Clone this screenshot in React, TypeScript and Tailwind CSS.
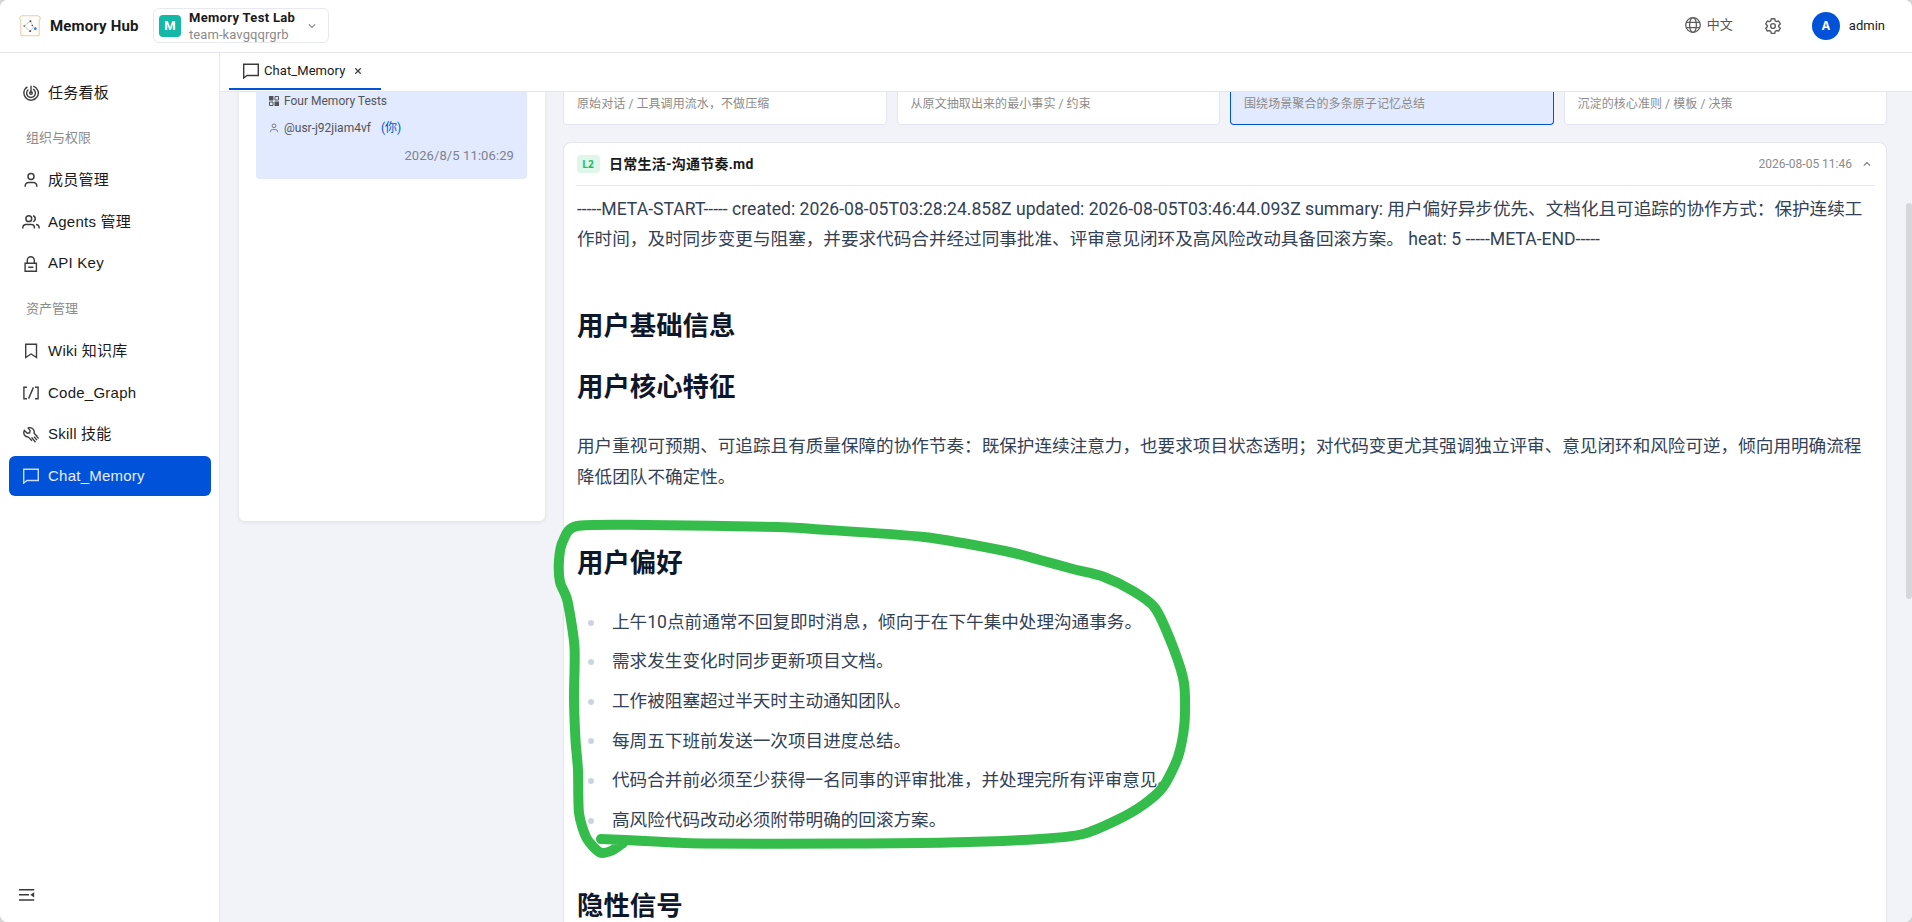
import React from 'react';

type IconProps = { className?: string };

const ChatIcon = ({ className }: IconProps) => (
  <svg className={className} viewBox="0 0 16 16" fill="none" stroke="currentColor" strokeWidth="1.4">
    <path d="M.7 1.2h14.6v11.3H4L.7 15V1.2z" />
  </svg>
);

const TaskIcon = ({ className }: IconProps) => (
  <svg className={className} viewBox="0 0 16 16" fill="none" stroke="currentColor" strokeWidth="1.4">
    <path d="M8 8V.8M10.2 1.1A7.2 7.2 0 1 1 4.4 1.8" />
    <path d="M10 4.1A4.4 4.4 0 1 1 5.4 4.5" />
    <circle cx="8" cy="8" r="1.3" />
  </svg>
);

const UserIcon = ({ className }: IconProps) => (
  <svg className={className} viewBox="0 0 16 16" fill="none" stroke="currentColor" strokeWidth="1.5">
    <circle cx="8" cy="4.5" r="3" />
    <path d="M2.2 14.8v-.9a3.4 3.4 0 0 1 3.4-3.4h4.8a3.4 3.4 0 0 1 3.4 3.4v.9" />
  </svg>
);

const UsersIcon = ({ className }: IconProps) => (
  <svg className={className} viewBox="0 0 18 16" fill="none" stroke="currentColor" strokeWidth="1.5">
    <circle cx="6.8" cy="4.7" r="2.9" />
    <path d="M.8 14.5v-1a3 3 0 0 1 3-3h5.6a3 3 0 0 1 3 3v1M11 1.8a3 3 0 0 1 0 5.8M14 10.5a3 3 0 0 1 3.1 3v1" />
  </svg>
);

const LockIcon = ({ className }: IconProps) => (
  <svg className={className} viewBox="0 0 16 16" fill="none" stroke="currentColor" strokeWidth="1.4">
    <path d="M2.1 7.3h11.3v7.9H2.1zM4.3 7.3V4.2a3.5 3.5 0 0 1 7 0v3.1M5.2 11.2h5.2" />
  </svg>
);

const BookmarkIcon = ({ className }: IconProps) => (
  <svg className={className} viewBox="0 0 16 16" fill="none" stroke="currentColor" strokeWidth="1.4">
    <path d="M2.7 1.3h10.8v13.2L8.1 11l-5.4 3.5z" />
  </svg>
);

const CodeIcon = ({ className }: IconProps) => (
  <svg className={className} viewBox="0 0 16 16" fill="none" stroke="currentColor" strokeWidth="1.4">
    <path d="M4 2.2H.9v11.6H4M12 2.2h3.1v11.6H12M10.4 2.4 5.6 13.6" />
  </svg>
);

const ToolIcon = ({ className }: IconProps) => (
  <svg className={className} viewBox="0 0 16 16" fill="none" stroke="currentColor" strokeWidth="1.4">
    <path d="M4.8.9 7.1 3.4 6.6 5.8 4.3 6.2 1.4 3.4C-.1 6.5 1.5 10.1 5.4 10.1L9 13.7M4.8.9c3.8-1 7.2 1.5 6.3 5.4l3 3M8.6 10.4l3.9 4.9M11 9.6l2.9 3.5M13 8.6l2.6 2.9" />
  </svg>
);

const GlobeIcon = ({ className }: IconProps) => (
  <svg className={className} viewBox="0 0 16 16" fill="none" stroke="currentColor" strokeWidth="1.3">
    <circle cx="8" cy="8" r="7.3" />
    <ellipse cx="8" cy="8" rx="3.4" ry="7.3" />
    <path d="M1.2 5.3h13.6M1.2 10.7h13.6" />
  </svg>
);

const GearIcon = ({ className }: IconProps) => (
  <svg className={className} viewBox="0 0 16 16" fill="none" stroke="currentColor" strokeWidth="1.4" strokeLinejoin="round">
    <circle cx="8" cy="8" r="2.4" />
    <path d="M6.3.7h3.4l.5 2.1 1.3.8 2.1-.6 1.7 2.9-1.6 1.5v1.3l1.6 1.5-1.7 2.9-2.1-.6-1.3.8-.5 2.1H6.3l-.5-2.1-1.3-.8-2.1.6L.7 10.2l1.6-1.5V7.4L.7 5.9 2.4 3l2.1.6 1.3-.8z" />
  </svg>
);

const LogoIcon = ({ className }: IconProps) => (
  <svg className={className} viewBox="0 0 22 22" fill="none">
    <path d="M3.2.8h15.6a2.6 2.6 0 0 1 1.4 4.6v13.4a2 2 0 0 1-2 2H3.8a2 2 0 0 1-2-2V5.4A2.6 2.6 0 0 1 3.2.8z" fill="#fffdfa" stroke="#e8cdb0" strokeWidth="1.1" />
    <path d="M5.2 11.2 11.4 6l3 6.2-3.3 4-5.9-5z" stroke="#b9bcc2" strokeWidth=".8" />
    <g fill="#3c4048">
      <circle cx="5.2" cy="11" r=".8" />
      <circle cx="11.4" cy="6.2" r=".9" />
      <circle cx="11.2" cy="16.2" r=".9" />
      <circle cx="13.2" cy="10.5" r=".7" />
    </g>
    <circle cx="16.3" cy="13.7" r="1.4" fill="#2f7bf5" />
  </svg>
);

const Chevron = ({ className }: IconProps) => (
  <svg className={className} viewBox="0 0 8 8" fill="none" stroke="currentColor" strokeWidth="1.1">
    <path d="M.8 2.3 4 5.5l3.2-3.2" />
  </svg>
);

interface NavItem {
  label: string;
  icon: React.FC<IconProps>;
  active?: boolean;
}

const teamNav: NavItem[] = [
  { label: '成员管理', icon: UserIcon },
  { label: 'Agents 管理', icon: UsersIcon },
  { label: 'API Key', icon: LockIcon },
];

const assetNav: NavItem[] = [
  { label: 'Wiki 知识库', icon: BookmarkIcon },
  { label: 'Code_Graph', icon: CodeIcon },
  { label: 'Skill 技能', icon: ToolIcon },
  { label: 'Chat_Memory', icon: ChatIcon, active: true },
];

const levels = [
  { text: '原始对话 / 工具调用流水，不做压缩' },
  { text: '从原文抽取出来的最小事实 / 约束' },
  { text: '围绕场景聚合的多条原子记忆总结', active: true },
  { text: '沉淀的核心准则 / 模板 / 决策' },
];

const preferences = [
  '上午10点前通常不回复即时消息，倾向于在下午集中处理沟通事务。',
  '需求发生变化时同步更新项目文档。',
  '工作被阻塞超过半天时主动通知团队。',
  '每周五下班前发送一次项目进度总结。',
  '代码合并前必须至少获得一名同事的评审批准，并处理完所有评审意见。',
  '高风险代码改动必须附带明确的回滚方案。',
];

const NavLink: React.FC<{ item: NavItem }> = ({ item }) => {
  const Icon = item.icon;
  return (
    <a
      className={`flex h-10 items-center rounded-md pl-[13px] text-[15px] tracking-[0.24px] ${
        item.active ? 'bg-[#0052d9] text-white/90' : 'text-[#1a1a1a]'
      }`}
    >
      <span className="flex w-[18px] justify-center">
        <Icon className={`h-4 ${item.icon === UsersIcon ? 'w-[18px]' : 'w-4'} ${item.active ? 'text-white/80' : 'text-[#3d3d3d]'}`} />
      </span>
      <span className="ml-2">{item.label}</span>
    </a>
  );
};

const Sidebar = () => (
  <aside className="flex w-[220px] shrink-0 flex-col border-r border-[#e7e8f0] bg-white pr-2 pl-[9px] font-['Liberation_Sans','Noto_Sans_CJK_SC',sans-serif]">
    <nav className="mt-5 flex flex-col">
      <NavLink item={{ label: '任务看板', icon: TaskIcon }} />
      <div className="mt-[15px] pl-[17px] text-[13px] leading-5 text-[#8b8b8b]">组织与权限</div>
      <div className="mt-3 flex flex-col gap-[1.8px]">
        {teamNav.map(item => <NavLink key={item.label} item={item} />)}
      </div>
      <div className="mt-[15.4px] pl-[17px] text-[13px] leading-5 text-[#8b8b8b]">资产管理</div>
      <div className="mt-3 flex flex-col gap-[1.8px]">
        {assetNav.map(item => <NavLink key={item.label} item={item} />)}
      </div>
    </nav>
    <button className="mt-auto mb-[19px] ml-[10px] w-4 text-[#3a3a3a]">
      <svg className="h-4 w-4" viewBox="0 0 16 16" fill="none" stroke="currentColor" strokeWidth="1.5">
        <path d="M0 2.7h15.2M0 7.8h10M0 12.9h15.2" />
        <path d="M15.2 5.2v5.2L11.3 7.8z" fill="currentColor" stroke="none" />
      </svg>
    </button>
  </aside>
);

const Header = () => (
  <header className="flex h-[53px] shrink-0 items-center border-b border-[#e4e5ee] bg-white pl-[19px] pr-[27px]">
    <LogoIcon className="h-[22px] w-[22px]" />
    <span className="ml-[9px] w-[103px] text-[15px] font-bold tracking-[0.15px] text-[#1a1a1a]">Memory Hub</span>
    <div className="mb-px flex h-[35px] w-[176px] items-center rounded-md border border-[#e7e8f0] pl-[5px]">
      <div className="flex h-[22px] w-[22px] items-center justify-center rounded bg-[#14b8a6] text-[13px] font-bold text-white">M</div>
      <div className="ml-[8px] w-[119px]">
        <div className="text-[13px] leading-[17px] font-bold tracking-[0.32px] text-[#1a1a1a]">Memory Test Lab</div>
        <div className="text-[13px] leading-[17px] tracking-[0.08px] text-[#8b8b8b]">team-kavgqqrgrb</div>
      </div>
      <Chevron className="h-2 w-2 text-[#8b8b8b]" />
    </div>
    <div className="ml-auto flex items-center">
      <GlobeIcon className="mb-[2px] h-4 w-4 text-[#5e5e5e]" />
      <span className="mb-[2px] ml-[6px] text-[13px] text-[#555]">中文</span>
      <GearIcon className="ml-[32px] h-4 w-4 text-[#5e5e5e]" />
      <div className="ml-[31px] flex h-7 w-7 items-center justify-center rounded-full bg-[#0052d9] font-['Noto_Sans'] text-xs font-bold text-white">A</div>
      <span className="ml-[9px] text-[13px] text-[#1a1a1a]">admin</span>
    </div>
  </header>
);

const TabBar = () => (
  <div className="h-[39px] shrink-0 border-b border-[#e4e5ee] bg-white pl-[9px]">
    <div className="flex h-[37px] w-[152px] items-center border-b-2 border-[#0052d9] pl-[14px]">
      <ChatIcon className="h-4 w-4 text-[#3a3a3a]" />
      <span className="ml-[5px] text-[13px] tracking-[0.08px] text-[#1a1a1a]">Chat_Memory</span>
      <svg className="ml-[10px] h-[6px] w-[6px]" viewBox="0 0 6 6" stroke="#444" strokeWidth="1.3">
        <path d="M.3.3l5.4 5.4M5.7.3.3 5.7" />
      </svg>
    </div>
  </div>
);

const SessionPanel = () => (
  <section className="h-[429px] w-[306px] rounded-b-md bg-white pr-[18px] pl-[17px] shadow-[0_1px_4px_rgba(30,40,90,0.1)]">
    <div className="h-[87px] rounded-b-sm bg-[#e1eafe] px-[13px] text-xs">
      <div className="flex h-[18px] items-center text-[#555]">
        <svg className="h-[10px] w-[10px]" viewBox="0 0 10 10" fill="currentColor">
          <path d="M0 0h4.5v4.5H0zM5.5 5.5H10V10H5.500z" />
          <path d="M6 .5h3.5V4H6zM.5 6H4v3.5H.5z" fill="none" stroke="currentColor" />
        </svg>
        <span className="ml-[5px]">Four Memory Tests</span>
      </div>
      <div className="mt-[9px] flex h-[18px] items-center text-[#555]">
        <UserIcon className="h-[10px] w-[10px] text-[#777]" />
        <span className="ml-[5px]">@usr-j92jiam4vf</span>
        <span className="ml-[10px] text-[#0052d9]">(你)</span>
      </div>
      <div className="mt-[10px] text-right text-[13px] leading-[18px] tracking-[0.1px] text-[#7d828e]">2026/8/5 11:06:29</div>
    </div>
  </section>
);

const heading = "text-[26.4px] leading-[35.2px] font-bold text-[#0f172a]";

const DocumentCard = () => (
  <article className="mt-[17px] h-[900px] rounded-t-lg border border-[#e4e6ef] bg-white px-3">
    <div className="flex h-[43px] items-center border-b border-[#e7e8ec]">
      <span className="ml-[0.5px] flex h-[18px] w-[23px] items-center justify-center rounded bg-[#def7ea] font-['Noto_Sans'] text-[10px] font-bold text-[#1dbf63]">L2</span>
      <span className="ml-[9.5px] text-sm leading-5 font-bold tracking-[0.25px] text-[#1a1a1a]">日常生活-沟通节奏.md</span>
      <span className="ml-auto text-xs text-[#8b8b8b]">2026-08-05 11:46</span>
      <Chevron className="mr-[3px] ml-[11px] h-2 w-2 rotate-180 text-[#777]" />
    </div>
    <div className="pt-[7.6px] pl-px text-[17.6px] leading-[30.8px] text-[#334155]">
      <p>
        -----META-START----- created: 2026-08-05T03:28:24.858Z updated: 2026-08-05T03:46:44.093Z summary: 用户偏好异步优先、文档化且可追踪的协作方式：保护连续工作时间，及时同步变更与阻塞，并要求代码合并经过同事批准、评审意见闭环及高风险改动具备回滚方案。 heat: 5 -----META-END-----
      </p>
      <h2 className={`mt-[53.6px] ${heading}`}>用户基础信息</h2>
      <h2 className={`mt-[25.6px] ${heading}`}>用户核心特征</h2>
      <p className="mt-[26.4px]">
        用户重视可预期、可追踪且有质量保障的协作节奏：既保护连续注意力，也要求项目状态透明；对代码变更尤其强调独立评审、意见闭环和风险可逆，倾向用明确流程降低团队不确定性。
      </p>
      <h2 className={`mt-[52.8px] ${heading}`}>用户偏好</h2>
      <ul className="mt-[26px] flex flex-col gap-[8.8px] pl-[11px]">
        {preferences.map(text => (
          <li key={text} className="flex items-center">
            <span className="mt-px h-[6px] w-[6px] rounded-full bg-[#cbd5e1]" />
            <span className="ml-[18px]">{text}</span>
          </li>
        ))}
      </ul>
      <h2 className={`mt-[53.2px] ${heading}`}>隐性信号</h2>
    </div>
  </article>
);

// points of the freehand loop drawn round the preference list
const loop: [number, number][] = [
  [601, 839], [625, 840], [703, 843.5], [850, 843.5], [948, 842.5], [1040, 839], [1083, 834], [1117, 820], [1143, 805],
  [1163, 787], [1178, 757], [1184.5, 723], [1184, 683], [1173, 647], [1155, 608], [1133, 591], [1103, 576.5],
  [1073, 569], [1040, 560], [1005, 551], [924, 537], [813, 529], [777, 527], [646, 525], [577, 526], [563, 541],
  [559, 560], [560, 582], [567.5, 601], [574.5, 647], [574, 697], [575.5, 740], [578, 770], [579, 813], [586.5, 838],
  [600, 852.5], [612, 850.5], [623, 843],
];

// Catmull-Rom spline through the points
const toPath = (pts: [number, number][]) => {
  let d = `M${pts[0][0]} ${pts[0][1]}`;
  for (let i = 0; i < pts.length - 1; i++) {
    const p0 = pts[Math.max(i - 1, 0)];
    const p1 = pts[i];
    const p2 = pts[i + 1];
    const p3 = pts[Math.min(i + 2, pts.length - 1)];
    d += `C${p1[0] + (p2[0] - p0[0]) / 8} ${p1[1] + (p2[1] - p0[1]) / 8} ${p2[0] - (p3[0] - p1[0]) / 8} ${p2[1] - (p3[1] - p1[1]) / 8} ${p2[0]} ${p2[1]}`;
  }
  return d;
};

const App: React.FC = () => {
  return (
    <div className="h-[922px] w-[1912px] overflow-hidden bg-[#d5d5d5] font-['Roboto','Noto_Sans_CJK_SC',sans-serif]">
      <div className="relative flex h-full flex-col overflow-hidden rounded-lg bg-white">
        <Header />
        <div className="flex min-h-0 flex-1">
          <Sidebar />
          <main className="flex min-w-0 flex-1 flex-col bg-[#f2f3f8]">
            <TabBar />
            <div className="flex min-h-0 flex-1 overflow-hidden pl-[19px]">
              <SessionPanel />
              <div className="ml-[18px] w-[1324px]">
                <div className="grid grid-cols-4 gap-[10px]">
                  {levels.map(level => (
                    <div
                      key={level.text}
                      className={`h-[33px] rounded-b-sm border border-t-0 px-[13px] pt-[3px] text-xs leading-[18px] tracking-[0.08px] text-[#8b8b8b] ${
                        level.active ? 'border-[#0052d9] bg-[#e1eafe]' : 'border-[#e4e6ef] bg-white'
                      }`}
                    >
                      {level.text}
                    </div>
                  ))}
                </div>
                <DocumentCard />
              </div>
              <div className="mt-[111px] ml-auto h-[396px] w-[6px] rounded-full bg-[#d6d7db]" />
            </div>
          </main>
        </div>
        <svg className="pointer-events-none absolute inset-0 h-full w-full" viewBox="0 0 1912 922" fill="none">
          <path d={toPath(loop)} stroke="#35bd4b" strokeWidth="10" strokeLinecap="round" strokeLinejoin="round" />
        </svg>
      </div>
    </div>
  );
};

export default App;
